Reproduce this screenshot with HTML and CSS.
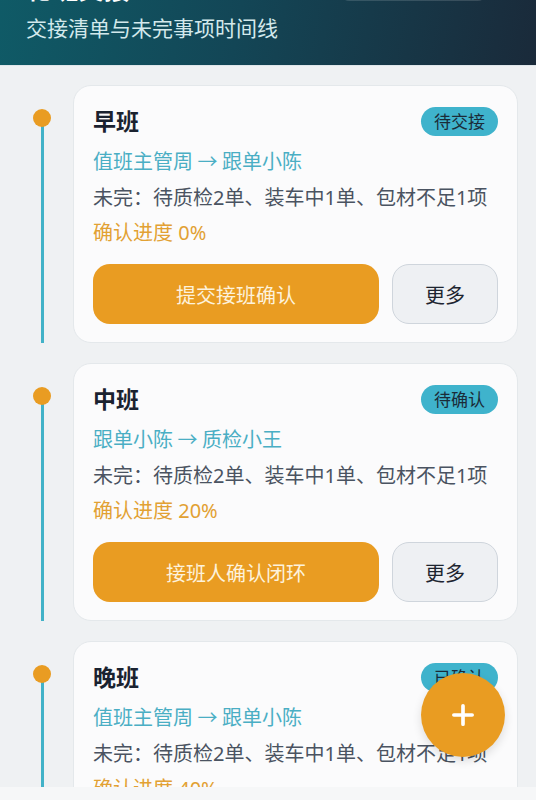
FILE: index.html
```html
<!DOCTYPE html>
<html lang="zh-CN">
<head>
<meta charset="utf-8">
<title>轮班交接</title>
<link rel="stylesheet" href="styles.css">
</head>
<body>
<header class="header">
  <div class="header-top">
    <h1 class="title">轮班交接</h1>
    <div class="header-box"></div>
  </div>
  <p class="subtitle">交接清单与未完事项时间线</p>
</header>

<main class="timeline">
  <section class="item">
    <div class="rail"><span class="dot"></span><span class="line"></span></div>
    <div class="card">
      <div class="card-head">
        <h2 class="shift">早班</h2>
        <span class="badge">待交接</span>
      </div>
      <p class="handover">值班主管周 → 跟单小陈</p>
      <p class="pending">未完：待质检2单、装车中1单、包材不足1项</p>
      <p class="progress">确认进度 0%</p>
      <div class="actions">
        <button class="btn-primary">提交接班确认</button>
        <button class="btn-more">更多</button>
      </div>
    </div>
  </section>

  <section class="item">
    <div class="rail"><span class="dot"></span><span class="line"></span></div>
    <div class="card">
      <div class="card-head">
        <h2 class="shift">中班</h2>
        <span class="badge">待确认</span>
      </div>
      <p class="handover">跟单小陈 → 质检小王</p>
      <p class="pending">未完：待质检2单、装车中1单、包材不足1项</p>
      <p class="progress">确认进度 20%</p>
      <div class="actions">
        <button class="btn-primary">接班人确认闭环</button>
        <button class="btn-more">更多</button>
      </div>
    </div>
  </section>

  <section class="item">
    <div class="rail"><span class="dot"></span><span class="line"></span></div>
    <div class="card">
      <div class="card-head">
        <h2 class="shift">晚班</h2>
        <span class="badge">已确认</span>
      </div>
      <p class="handover">值班主管周 → 跟单小陈</p>
      <p class="pending">未完：待质检2单、装车中1单、包材不足1项</p>
      <p class="progress">确认进度 40%</p>
      <div class="actions">
        <button class="btn-primary">查看交接记录</button>
        <button class="btn-more">更多</button>
      </div>
    </div>
  </section>
</main>

<button class="fab" aria-label="新增">
  <svg width="24" height="24" viewBox="0 0 24 24"><path d="M12 2v20M2 12h20" stroke="#fff" stroke-width="4" stroke-linecap="round" fill="none"/></svg>
</button>
<div class="bottom-bar"></div>
</body>
</html>
```

FILE: styles.css
```css
* { box-sizing: border-box; }
html, body { margin: 0; padding: 0; }
body {
  background: #eff1f3;
  font-family: "Noto Sans", "Noto Sans CJK SC", sans-serif;
  color: #1b2431;
  width: 536px;
  overflow: hidden;
}
p, h1, h2 { margin: 0; }

.header {
  margin-top: -42px;
  height: 108px;
  padding: 0 26px;
  background: linear-gradient(100deg, #0f5b67 0%, #134656 45%, #1a2a3a 100%);
  border-bottom: 1px solid #dfe6ea;
}
.header-top {
  height: 44px;
  display: flex;
  align-items: flex-end;
  justify-content: space-between;
}
.title {
  font-size: 26px;
  line-height: 26px;
  font-weight: 700;
  color: #ffffff;
}
.header-box {
  width: 145px;
  height: 34px;
  margin-right: 24px;
  margin-bottom: 1px;
  border-radius: 8px;
  background: rgba(255,255,255,0.14);
}
.subtitle {
  margin-top: 11px;
  font-size: 21px;
  line-height: 30px;
  color: #d3e9ec;
}

.timeline {
  padding: 19px 18px 0 24px;
  display: flex;
  flex-direction: column;
  gap: 20px;
}
.item {
  display: flex;
  gap: 13px;
}
.rail {
  width: 36px;
  flex: none;
  display: flex;
  flex-direction: column;
  align-items: center;
  padding-top: 24px;
}
.dot {
  width: 18px;
  height: 18px;
  border-radius: 50%;
  background: #e99c22;
  flex: none;
  position: relative;
  z-index: 1;
}
.line {
  width: 3px;
  flex: 1;
  margin-top: -9px;
  background: #42b2c8;
}
.card {
  flex: 1;
  height: 258px;
  background: #fbfbfc;
  border: 1px solid #e4e8eb;
  border-radius: 18px;
  padding: 20px 19px 0 19px;
}
.card-head {
  height: 30px;
  display: flex;
  align-items: center;
  justify-content: space-between;
}
.shift {
  font-size: 23px;
  line-height: 30px;
  font-weight: 700;
  color: #1a2230;
}
.badge {
  height: 29px;
  line-height: 29px;
  padding: 0 13px;
  border-radius: 15px;
  background: #3fb3cc;
  color: #1b2b38;
  font-size: 17px;
}
.handover {
  margin-top: 7px;
  font-family: "Noto Sans CJK SC", "Noto Sans", sans-serif;
  font-size: 20px;
  line-height: 36px;
  color: #4aaec4;
}
.pending {
  margin-top: 1px;
  font-size: 20px;
  line-height: 36px;
  color: #4a5361;
}
.progress {
  font-size: 20px;
  line-height: 34px;
  color: #e2a133;
}
.actions {
  margin-top: 14px;
  display: flex;
  gap: 13px;
}
.btn-primary {
  flex: 1;
  height: 60px;
  border: none;
  border-radius: 17px;
  background: #e99c22;
  color: #fdf2dc;
  font-family: inherit;
  font-size: 20px;
}
.btn-more {
  width: 106px;
  height: 60px;
  border: 1.5px solid #cfd5dc;
  border-radius: 17px;
  background: #eef0f3;
  color: #1d2530;
  font-family: inherit;
  font-size: 20px;
}

.fab {
  position: fixed;
  left: 421px;
  top: 673px;
  width: 84px;
  height: 84px;
  border-radius: 50%;
  border: none;
  background: #e99c22;
  display: flex;
  align-items: center;
  justify-content: center;
  box-shadow: 0 4px 10px rgba(0,0,0,0.12);
}
.fab svg { width: 22px; height: 22px; }

.bottom-bar {
  position: fixed;
  left: 0;
  bottom: 0;
  width: 536px;
  height: 13px;
  background: #f6f7f8;
}
```
